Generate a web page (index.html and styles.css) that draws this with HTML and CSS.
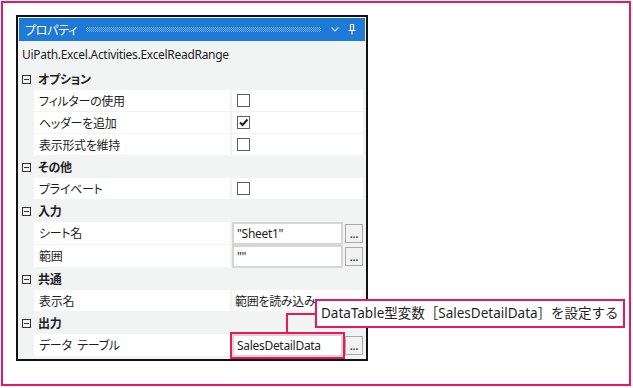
FILE: index.html
```html
<!DOCTYPE html>
<html lang="ja">
<head>
  <meta charset="UTF-8" />
  <title>プロパティ</title>
  <link rel="stylesheet" href="styles.css">
</head>
<body>
  <div class="frame">
    <div class="panel">
      <div class="titlebar">
        <span class="title">プロパティ</span>
        <span class="grip"></span>
        <svg class="chevron" viewBox="0 0 8 5"><path d="M0.5 0.5 L4 4 L7.5 0.5" fill="none" stroke="#cfe2f7" stroke-width="1.2"/></svg>
        <svg class="pin" viewBox="0 0 8 11"><path d="M2 0.5 H6 M2.5 0.5 V6 M5.5 0.5 V6 M0.5 6.5 H7.5 M4 6.5 V10.5" fill="none" stroke="#ffffff" stroke-width="1.2"/></svg>
      </div>
      <div class="desc">UiPath.Excel.Activities.ExcelReadRange</div>

      <div class="grid">
        <div class="cat"><span class="toggle"></span>オプション</div>
        <div class="row">
          <div class="name">フィルターの使用</div>
          <div class="value"><span class="check"></span></div>
        </div>
        <div class="row">
          <div class="name">ヘッダーを追加</div>
          <div class="value">
            <span class="check">
              <svg viewBox="0 0 11 11"><path d="M2 5.5 L4.5 8 L9.5 2.5" fill="none" stroke="#1e1e1e" stroke-width="2"/></svg>
            </span>
          </div>
        </div>
        <div class="row">
          <div class="name">表示形式を維持</div>
          <div class="value"><span class="check"></span></div>
        </div>

        <div class="cat"><span class="toggle"></span>その他</div>
        <div class="row">
          <div class="name">プライベート</div>
          <div class="value"><span class="check"></span></div>
        </div>

        <div class="cat"><span class="toggle"></span>入力</div>
        <div class="row editor">
          <div class="name">シート名</div>
          <div class="value">
            <span class="field">"Sheet1"</span>
            <span class="dots">...</span>
          </div>
        </div>
        <div class="row editor">
          <div class="name">範囲</div>
          <div class="value">
            <span class="field">""</span>
            <span class="dots">...</span>
          </div>
        </div>

        <div class="cat"><span class="toggle"></span>共通</div>
        <div class="row">
          <div class="name">表示名</div>
          <div class="value text">範囲を読み込み</div>
        </div>

        <div class="cat"><span class="toggle"></span>出力</div>
        <div class="row editor">
          <div class="name">データ&ensp;テーブル</div>
          <div class="value">
            <span class="field marked">SalesDetailData</span>
            <span class="dots">...</span>
          </div>
        </div>
      </div>
    </div>

    <div class="connector"></div>
    <div class="callout">DataTable型変数［SalesDetailData］を設定する</div>
  </div>
</body>
</html>
```

FILE: styles.css
```css
/* ===== Palette ===== */
:root {
  --pink: #e8185f;
  --blue: #1f7ad5;
  --panel-bg: #f2f4f4;
  --row-bg: #ffffff;
  --text: #1e1e1e;
}

*, *::before, *::after { box-sizing: border-box; margin: 0; padding: 0; }

body {
  background: #fff;
  color: var(--text);
  font-family: "Noto Sans", "Noto Sans CJK JP", sans-serif;
  font-size: 12px;
  letter-spacing: -0.3px;
  font-feature-settings: "palt";
}

/* Outer annotation frame */
.frame {
  position: relative;
  margin: 1px;
  width: 630px;
  height: 385px;
  border: 2px solid var(--pink);
}

/* Properties panel */
.panel {
  margin: 12px 0 0 13px;
  width: 352px;
  height: 346px;
  border: 2px solid #111;
  padding: 1px;
  background: var(--panel-bg);
  display: flex;
  flex-direction: column;
}

.titlebar {
  height: 23px;
  flex-shrink: 0;
  background: var(--blue);
  display: flex;
  align-items: center;
  padding-left: 6px;
  color: #fff;
  white-space: nowrap;
}
.title { font-size: 12px; flex-shrink: 0; }
.grip {
  flex: 1;
  margin-left: 9px;
  height: 5px;
  background: repeating-conic-gradient(#6fa9e6 0 25%, transparent 0 50%) 0 0 / 2px 2px;
}
.chevron { width: 8px; height: 5px; margin-left: 10px; flex-shrink: 0; }
.pin { width: 8px; height: 11px; margin: 0 9px 0 9px; flex-shrink: 0; }

.desc {
  height: 27px;
  flex-shrink: 0;
  line-height: 27px;
  padding-left: 3px;
}

/* Grid rows */
.cat {
  height: 22px;
  display: flex;
  align-items: center;
  padding-left: 3px;
  font-weight: 700;
}
.toggle {
  position: relative;
  width: 9px;
  height: 9px;
  border: 1px solid #333;
  margin-right: 7px;
}
.toggle::after {
  content: "";
  position: absolute;
  left: 1px;
  top: 3px;
  width: 5px;
  height: 1px;
  background: #333;
}

.row {
  height: 22px;
  display: flex;
  margin: 0 2px 0 15px;
  border-bottom: 1px solid var(--panel-bg);
}
.row.editor { height: 23px; margin-right: 1px; }

.name {
  width: 196px;
  background: var(--row-bg);
  padding-left: 5px;
  display: flex;
  align-items: center;
  white-space: pre;
}
.value {
  flex: 1;
  margin-left: 2px;
  background: var(--row-bg);
  display: flex;
  align-items: center;
  padding-left: 5px;
}
.value.text { padding-left: 3px; overflow: hidden; white-space: nowrap; }
.editor .value { padding-left: 0; background: var(--panel-bg); }

.check {
  width: 13px;
  height: 13px;
  border: 1px solid #5f5f5f;
  background: #fff;
  display: flex;
  align-items: center;
  justify-content: center;
}
.check svg { width: 11px; height: 11px; }

.field {
  width: 111px;
  height: 23px;
  border: 2px solid #d6d6d6;
  background: #fff;
  padding-left: 3px;
  display: flex;
  align-items: center;
}
.field.marked { outline: 2px solid var(--pink); }

.dots {
  margin-left: 2px;
  width: 18px;
  height: 19px;
  border: 1px solid #a9a9a9;
  background: #f2f2f2;
  font-size: 10px;
  font-weight: 700;
  color: #1c3f78;
  text-align: center;
  line-height: 18px;
  letter-spacing: 0;
}

/* Annotation */
.connector {
  position: absolute;
  left: 283px;
  top: 310px;
  width: 29px;
  height: 19px;
  border-left: 2px solid var(--pink);
  border-top: 2px solid var(--pink);
}
.callout {
  position: absolute;
  left: 312px;
  top: 296px;
  width: 310px;
  height: 29px;
  border: 2px solid var(--pink);
  background: #fff;
  font-size: 13.5px;
  line-height: 25px;
  padding-left: 4px;
  letter-spacing: 0;
  font-feature-settings: normal;
  white-space: nowrap;
}
```
